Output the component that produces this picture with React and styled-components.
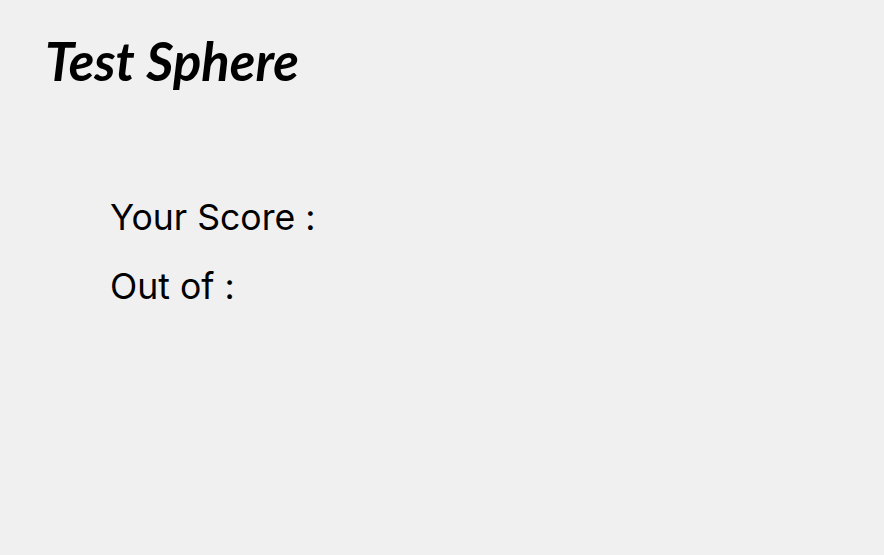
import React from 'react';
import styled, { createGlobalStyle } from 'styled-components';

const GlobalStyle = createGlobalStyle`
    html, body {
        margin: 0;
        padding: 0;
        background-color: #f0f0f0;
        width: 884px;
        height: 555px;
        overflow: hidden;
    }
`;

const App = () => {
    return (
        <Container>
            <GlobalStyle />
            <Title>Test Sphere</Title>
            <ScoreBox>
                <ScoreLine>Your Score :</ScoreLine>
                <ScoreLine>Out of :</ScoreLine>
            </ScoreBox>
        </Container>
    );
}

const Container = styled.div`
    display: flex;
    flex-direction: column;
    width: 884px;
    height: 555px;
    padding: 29px 0 0 45px;
    box-sizing: border-box;
    background-color: #f0f0f0;
`;

const Title = styled.h1`
    margin: 0;
    font-family: Lato, sans-serif;
    font-weight: 700;
    font-style: italic;
    font-size: 52.6px;
    line-height: 64px;
    color: #000;
`;

const ScoreBox = styled.div`
    display: flex;
    flex-direction: column;
    gap: 23px;
    margin: 102px 0 0 65px;
`;

const ScoreLine = styled.div`
    font-family: Inter, sans-serif;
    font-size: 35.6px;
    line-height: 46px;
    color: #000;
`;

export default App;
